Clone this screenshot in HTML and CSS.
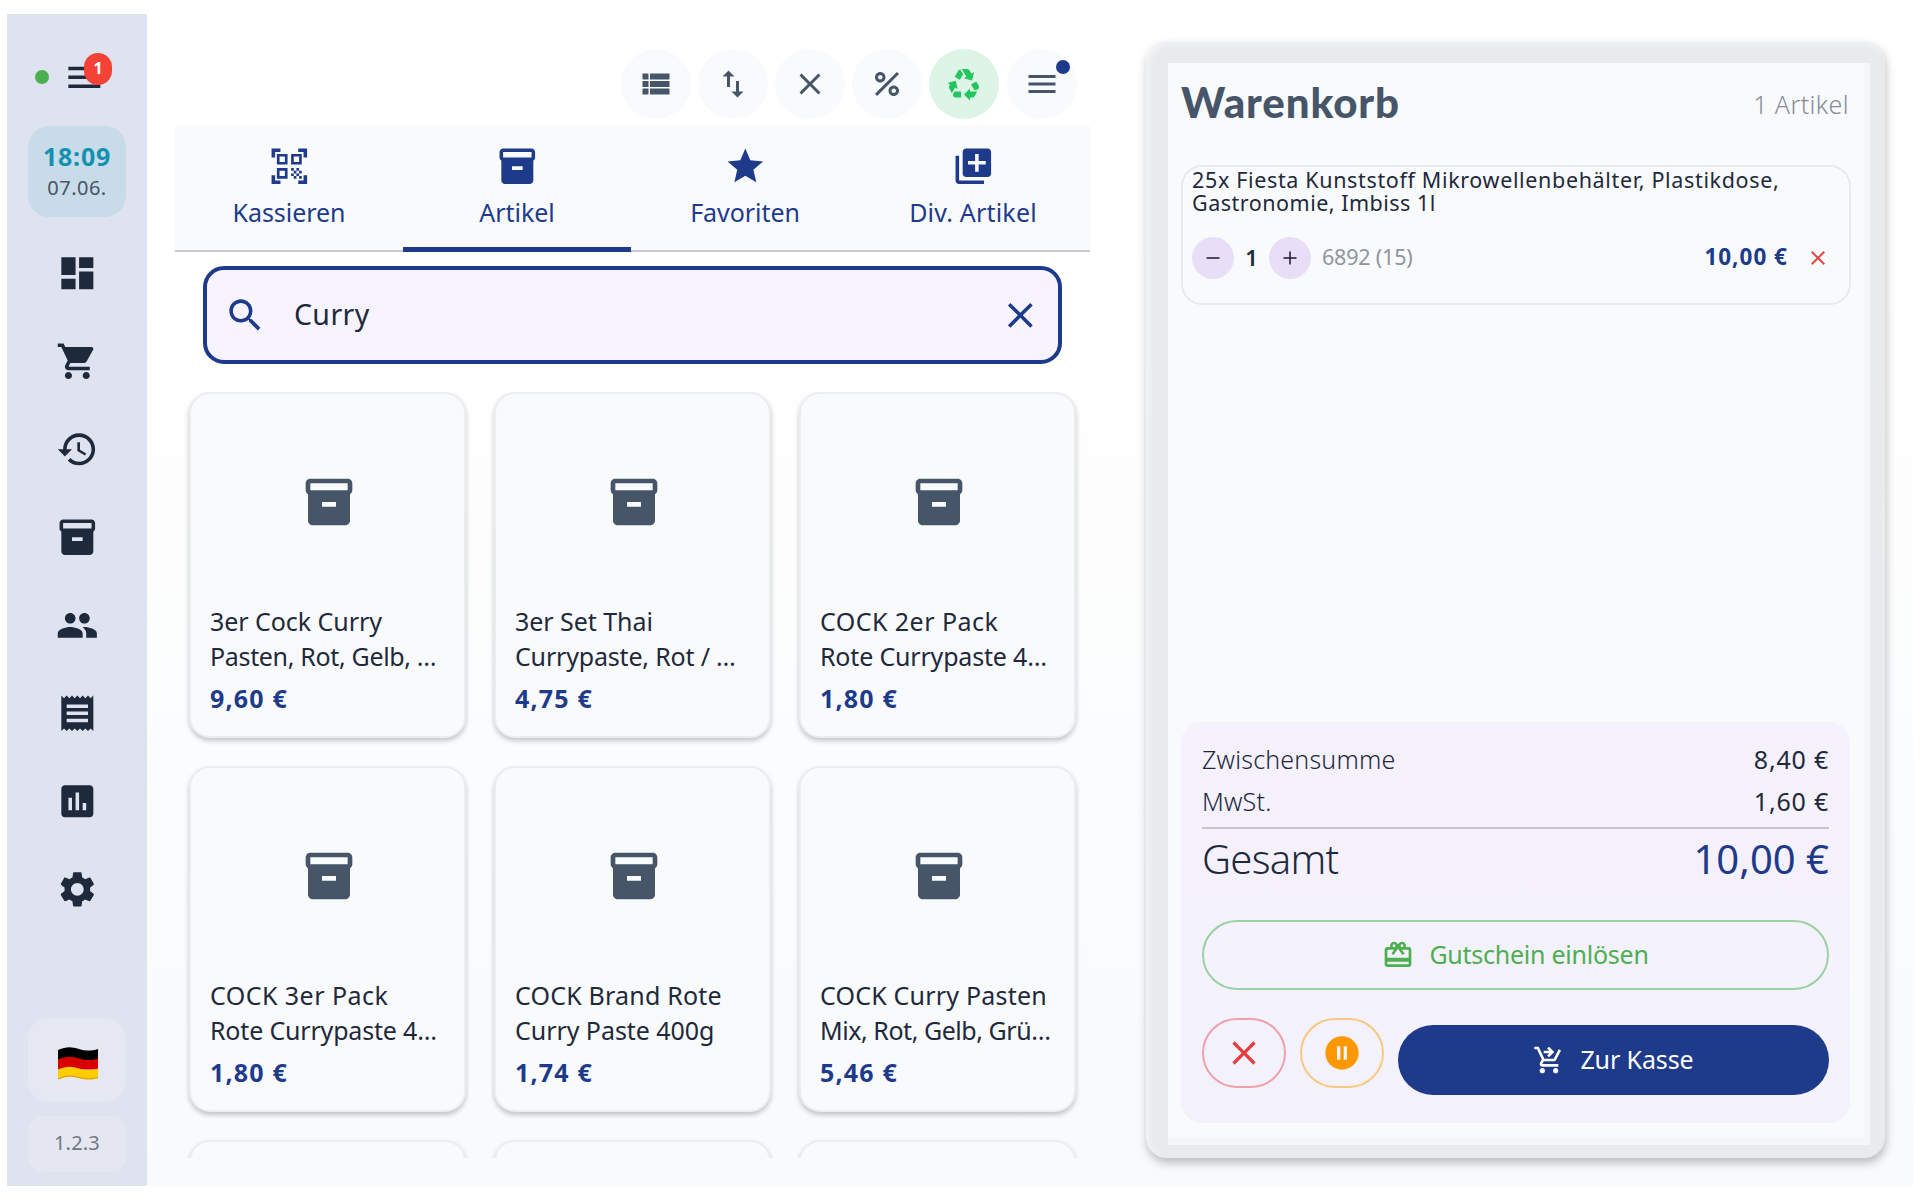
FILE: index.html
```html
<!DOCTYPE html>
<html lang="de">
<head>
<meta charset="utf-8">
<title>Kasse</title>
<link rel="stylesheet" href="styles.css">
</head>
<body>
<svg class="defs" aria-hidden="true">
  <symbol id="i-menu" viewBox="0 0 24 24"><path d="M3 18h18v-2H3v2zm0-5h18v-2H3v2zm0-7v2h18V6H3z"/></symbol>
  <symbol id="i-close" viewBox="0 0 24 24"><path d="M19 6.41 17.59 5 12 10.59 6.41 5 5 6.41 10.59 12 5 17.59 6.41 19 12 13.41 17.59 19 19 17.59 13.41 12z"/></symbol>
  <symbol id="i-box" viewBox="0 0 24 24"><path d="M20 2H4c-1 0-2 .9-2 2v3.01c0 .72.43 1.34 1 1.69V20c0 1.1 1.1 2 2 2h14c.9 0 2-.9 2-2V8.7c.57-.35 1-.97 1-1.69V4c0-1.1-1-2-2-2zm-5 12H9v-2h6v2zm5-7H4V4h16v3z"/></symbol>
</svg>
<div class="app">
  <aside class="sidebar">
    <div class="status">
      <span class="online"></span>
      <span class="menu"><svg class="icon"><use href="#i-menu"/></svg><span class="badge">1</span></span>
    </div>
    <div class="clock"><span class="time">18:09</span><span class="date">07.06.</span></div>
    <nav class="nav">
      <a><svg class="icon" viewBox="0 0 24 24"><path d="M3 13h8V3H3v10zm0 8h8v-6H3v6zm10 0h8V11h-8v10zm0-18v6h8V3h-8z"/></svg></a>
      <a><svg class="icon" viewBox="0 0 24 24"><path d="M7 18c-1.1 0-1.99.9-1.99 2S5.9 22 7 22s2-.9 2-2-.9-2-2-2zM1 2v2h2l3.6 7.59-1.35 2.45c-.16.28-.25.61-.25.96 0 1.1.9 2 2 2h12v-2H7.42c-.14 0-.25-.11-.25-.25l.03-.12.9-1.63h7.45c.75 0 1.41-.41 1.75-1.03l3.58-6.49c.08-.14.12-.31.12-.48 0-.55-.45-1-1-1H5.21l-.94-2H1zm16 16c-1.1 0-1.99.9-1.99 2s.89 2 1.99 2 2-.9 2-2-.9-2-2-2z"/></svg></a>
      <a><svg class="icon" viewBox="0 0 24 24"><path d="M13 3c-4.97 0-9 4.03-9 9H1l3.89 3.89.07.14L9 12H6c0-3.87 3.13-7 7-7s7 3.13 7 7-3.13 7-7 7c-1.93 0-3.68-.79-4.94-2.06l-1.42 1.42C8.27 19.99 10.51 21 13 21c4.97 0 9-4.03 9-9s-4.03-9-9-9zm-1 5v5l4.28 2.54.72-1.21-3.5-2.08V8H12z"/></svg></a>
      <a><svg class="icon"><use href="#i-box"/></svg></a>
      <a><svg class="icon" viewBox="0 0 24 24"><path d="M16 11c1.66 0 2.99-1.34 2.99-3S17.66 5 16 5c-1.66 0-3 1.34-3 3s1.34 3 3 3zm-8 0c1.66 0 2.99-1.34 2.99-3S9.66 5 8 5C6.34 5 5 6.34 5 8s1.34 3 3 3zm0 2c-2.33 0-7 1.17-7 3.5V19h14v-2.5c0-2.33-4.67-3.5-7-3.5zm8 0c-.29 0-.62.02-.97.05 1.16.84 1.97 1.97 1.97 3.45V19h6v-2.5c0-2.33-4.67-3.5-7-3.5z"/></svg></a>
      <a><svg class="icon" viewBox="0 0 24 24"><path d="M18 17H6v-2h12v2zm0-4H6v-2h12v2zm0-4H6V7h12v2zM3 22l1.500-1.500L6 22l1.500-1.500L9 22l1.500-1.500L12 22l1.500-1.500L15 22l1.500-1.500L18 22l1.500-1.500L21 22V2l-1.500 1.500L18 2l-1.500 1.500L15 2l-1.500 1.500L12 2l-1.500 1.500L9 2 7.500 3.500 6 2 4.500 3.500 3 2v20z"/></svg></a>
      <a><svg class="icon" viewBox="0 0 24 24"><path d="M19 3H5c-1.1 0-2 .9-2 2v14c0 1.1.9 2 2 2h14c1.1 0 2-.9 2-2V5c0-1.1-.9-2-2-2zM9 17H7v-7h2v7zm4 0h-2V7h2v10zm4 0h-2v-4h2v4z"/></svg></a>
      <a><svg class="icon" viewBox="0 0 24 24"><path d="M19.14 12.94c.04-.3.06-.61.06-.94 0-.32-.02-.64-.07-.94l2.03-1.58c.18-.14.23-.41.12-.61l-1.92-3.32c-.12-.22-.37-.29-.59-.22l-2.39.96c-.5-.38-1.03-.7-1.62-.94l-.36-2.54c-.04-.24-.24-.41-.48-.41h-3.84c-.24 0-.43.17-.47.41l-.36 2.54c-.59.24-1.13.57-1.62.94l-2.39-.96c-.22-.08-.47 0-.59.22L2.74 8.87c-.12.21-.08.47.12.61l2.03 1.58c-.05.3-.09.63-.09.94s.02.64.07.94l-2.03 1.58c-.18.14-.23.41-.12.61l1.92 3.32c.12.22.37.29.59.22l2.39-.96c.5.38 1.03.7 1.62.94l.36 2.54c.05.24.24.41.48.41h3.84c.24 0 .44-.17.47-.41l.36-2.54c.59-.24 1.13-.56 1.62-.94l2.39.96c.22.08.47 0 .59-.22l1.92-3.32c.12-.22.07-.47-.12-.61l-2.01-1.58zM12 15.6c-1.98 0-3.6-1.62-3.6-3.6s1.62-3.6 3.6-3.6 3.6 1.62 3.6 3.6-1.62 3.6-3.6 3.6z"/></svg></a>
    </nav>
    <div class="lang">
      <svg class="flag" viewBox="0 0 40 33"><path fill="#000" d="M0 3C9-1 14 0 21 2s12 2 19 0v11H0z"/><path fill="#d80000" d="M0 12.500c9-4 14-3 21-1s12 2 19 0v11H0z"/><path fill="#fc0" d="M0 22.500c9-4 14-3 21-1s12 2 19 0V31c-7 2-12 2-19 0s-12-2.500-21 1.500z"/><path fill="none" stroke="#d59a00" d="M0 32c9-4 14-3 21-1.500s12 2 19 0"/></svg>
    </div>
    <div class="version">1.2.3</div>
  </aside>

  <main class="main">
    <div class="toolbar">
      <button class="tool"><svg class="icon" viewBox="0 0 24 24"><path d="M3 14h4v-4H3v4zm0 5h4v-4H3v4zM3 9h4V5H3v4zm5 5h13v-4H8v4zm0 5h13v-4H8v4zM8 5v4h13V5H8z"/></svg></button>
      <button class="tool"><svg class="icon" viewBox="0 0 24 24"><path d="M16 17.010V10h-2v7.010h-3L15 21l4-3.990h-3zM9 3 5 6.990h3V14h2V6.990h3L9 3z"/></svg></button>
      <button class="tool"><svg class="icon"><use href="#i-close"/></svg></button>
      <button class="tool"><svg class="icon" viewBox="0 0 24 24"><path d="M7.500 11C9.430 11 11 9.430 11 7.500S9.430 4 7.500 4 4 5.570 4 7.500 5.570 11 7.500 11zm0-5C8.330 6 9 6.670 9 7.500S8.330 9 7.500 9 6 8.330 6 7.500 6.670 6 7.500 6zM4 18.580 18.590 4 20 5.410 5.420 20zM16.500 13c-1.930 0-3.500 1.570-3.500 3.500s1.570 3.500 3.500 3.500 3.500-1.570 3.500-3.500-1.570-3.500-3.500-3.500zm0 5c-.83 0-1.500-.67-1.500-1.500s.67-1.500 1.500-1.500 1.500.67 1.500 1.500-.67 1.500-1.500 1.500z"/></svg></button>
      <button class="tool tool-active"><svg class="icon" viewBox="0 0 24 24"><path d="M5.770 7.150 7.200 4.780l1.030-1.710c.39-.65 1.330-.65 1.720 0l1.480 2.460-1.230 2.060-1 1.620-3.430-2.060zm15.950 5.820-1.600-2.660-3.460 2L18.870 16H20c.76 0 1.450-.43 1.790-1.110.14-.28.21-.58.21-.89 0-.36-.1-.71-.28-1.030zM16 21h1.500c.76 0 1.450-.43 1.790-1.110L20.740 17H16v-2l-4 4 4 4v-2zm-6-4H5.700l-.84 1.410c-.3.5-.32 1.120-.06 1.650.28.57.87.94 1.520.94H10v-4zm-3.880-2.650 1.730 1.040L6.480 9.900 1 11.270l1.700 1.020-.41.69c-.35.59-.38 1.310-.07 1.920l1.630 3.260 2.270-3.810zm10.900-9.210-1.300-2.170C15.350 2.370 14.700 2 14 2h-3.530l3.120 5.200-1.720 1.030 5.490 1.370 1.370-5.490-1.710 1.030z"/></svg></button>
      <button class="tool"><svg class="icon"><use href="#i-menu"/></svg><span class="dot"></span></button>
    </div>

    <div class="tabs">
      <div class="tab"><svg class="icon" viewBox="0 0 24 24"><path d="M9.500 6.500v3h-3v-3h3M11 5H5v6h6V5zm-1.500 9.500v3h-3v-3h3M11 13H5v6h6v-6zm6.500-6.500v3h-3v-3h3M19 5h-6v6h6V5zm-6 8h1.500v1.500H13V13zm1.500 1.500H16V16h-1.500v-1.500zM16 13h1.500v1.500H16V13zm-3 3h1.500v1.500H13V16zm1.500 1.500H16V19h-1.500v-1.500zM16 16h1.500v1.500H16V16zm1.500-1.500H19V16h-1.500v-1.500zm0 3H19V19h-1.500v-1.500zM22 7h-2V4h-3V2h5v5zm0 15v-5h-2v3h-3v2h5zM2 22h5v-2H4v-3H2v5zM2 2v5h2V4h3V2H2z"/></svg><span>Kassieren</span></div>
      <div class="tab tab-active"><svg class="icon"><use href="#i-box"/></svg><span>Artikel</span></div>
      <div class="tab"><svg class="icon" viewBox="0 0 24 24"><path d="M12 17.270 18.180 21l-1.640-7.030L22 9.240l-7.190-.61L12 2 9.190 8.630 2 9.240l5.460 4.730L5.820 21z"/></svg><span>Favoriten</span></div>
      <div class="tab"><svg class="icon" viewBox="0 0 24 24"><path d="M4 6H2v14c0 1.1.9 2 2 2h14v-2H4V6zm16-4H8c-1.1 0-2 .9-2 2v12c0 1.1.9 2 2 2h12c1.1 0 2-.9 2-2V4c0-1.1-.9-2-2-2zm-1 9h-4v4h-2v-4H9V9h4V5h2v4h4v2z"/></svg><span class="loose">Div. Artikel</span></div>
    </div>

    <div class="search">
      <svg class="icon" viewBox="0 0 24 24"><path d="M15.500 14h-.79l-.28-.27C15.410 12.590 16 11.110 16 9.500 16 5.910 13.090 3 9.500 3S3 5.910 3 9.500 5.910 16 9.500 16c1.610 0 3.090-.59 4.230-1.570l.27.28v.79l5 4.990L20.490 19l-4.990-5zm-6 0C7.010 14 5 11.990 5 9.500S7.010 5 9.500 5 14 7.010 14 9.500 11.990 14 9.500 14z"/></svg>
      <span class="query">Curry</span>
      <svg class="icon"><use href="#i-close"/></svg>
    </div>

    <div class="products">
      <article class="product"><div class="thumb"><svg class="icon"><use href="#i-box"/></svg></div><h3>3er Cock Curry<br><span class="tight">Pasten, Rot, Gelb, …</span></h3><p>9,60 €</p></article>
      <article class="product"><div class="thumb"><svg class="icon"><use href="#i-box"/></svg></div><h3>3er Set Thai<br><span class="snug">Currypaste, Rot / …</span></h3><p>4,75 €</p></article>
      <article class="product"><div class="thumb"><svg class="icon"><use href="#i-box"/></svg></div><h3><span class="wide">COCK 2er Pack</span><br><span class="snug">Rote Currypaste 4…</span></h3><p>1,80 €</p></article>
      <article class="product"><div class="thumb"><svg class="icon"><use href="#i-box"/></svg></div><h3><span class="wide">COCK 3er Pack</span><br><span class="snug">Rote Currypaste 4…</span></h3><p>1,80 €</p></article>
      <article class="product"><div class="thumb"><svg class="icon"><use href="#i-box"/></svg></div><h3><span class="loose">COCK Brand Rote</span><br>Curry Paste 400g</h3><p>1,74 €</p></article>
      <article class="product"><div class="thumb"><svg class="icon"><use href="#i-box"/></svg></div><h3><span class="loose">COCK Curry Pasten</span><br><span class="tighter">Mix, Rot, Gelb, Grü…</span></h3><p>5,46 €</p></article>
      <article class="product"></article>
      <article class="product"></article>
      <article class="product"></article>
    </div>
  </main>

  <section class="cart">
    <div class="cart-inner">
      <header class="cart-head"><h2>Warenkorb</h2><span>1 Artikel</span></header>
      <div class="item">
        <div class="item-name"><span>25x Fiesta Kunststoff Mikrowellenbehälter, Plastikdose,</span><br>Gastronomie, Imbiss 1l</div>
        <div class="item-row">
          <button class="step"><svg viewBox="0 0 14 14"><path d="M.5 7h13"/></svg></button>
          <span class="qty">1</span>
          <button class="step"><svg viewBox="0 0 14 14"><path d="M.5 7h13M7 .5v13"/></svg></button>
          <span class="sku">6892 (15)</span>
          <span class="item-price">10,00 €</span>
          <svg class="icon remove"><use href="#i-close"/></svg>
        </div>
      </div>
      <div class="summary">
        <div class="line"><span class="subtotal">Zwischensumme</span><b>8,40 €</b></div>
        <div class="line"><span>MwSt.</span><b>1,60 €</b></div>
        <div class="total"><span>Gesamt</span><b>10,00 €</b></div>
        <button class="voucher"><svg class="icon" viewBox="0 0 24 24"><path d="M20 6h-2.180c.11-.31.18-.65.18-1 0-1.660-1.340-3-3-3-1.050 0-1.960.54-2.500 1.350l-.5.67-.5-.68C10.960 2.540 10.050 2 9 2 7.340 2 6 3.340 6 5c0 .35.07.69.18 1H4c-1.110 0-1.990.89-1.990 2L2 19c0 1.110.89 2 2 2h16c1.110 0 2-.89 2-2V8c0-1.110-.89-2-2-2zm-5-2c.55 0 1 .45 1 1s-.45 1-1 1-1-.45-1-1 .45-1 1-1zM9 4c.55 0 1 .45 1 1s-.45 1-1 1-1-.45-1-1 .45-1 1-1zm11 15H4v-2h16v2zm0-5H4V8h5.080L7 10.830 8.620 12 11 8.760l1-1.360 1 1.360L15.380 12 17 10.830 14.920 8H20v6z"/></svg><span>Gutschein einlösen</span></button>
        <div class="actions">
          <button class="pill cancel"><svg class="icon"><use href="#i-close"/></svg></button>
          <button class="pill hold"><svg class="icon" viewBox="0 0 24 24"><path d="M12 2C6.480 2 2 6.480 2 12s4.480 10 10 10 10-4.480 10-10S17.520 2 12 2zm-1 14H9V8h2v8zm4 0h-2V8h2v8z"/></svg></button>
          <button class="checkout"><svg class="icon" viewBox="0 0 24 24"><path d="M7 18c-1.1 0-1.99.9-1.99 2S5.9 22 7 22s2-.9 2-2-.9-2-2-2zm10 0c-1.1 0-1.99.9-1.99 2s.89 2 1.99 2 2-.9 2-2-.9-2-2-2zm-8.9-5h7.45c.75 0 1.41-.41 1.75-1.03L21 4.96 19.25 4l-3.7 7H8.53L4.27 2H1v2h2l3.6 7.59-1.35 2.44C4.52 15.37 5.48 17 7 17h12v-2H7l1.1-2zM12 2l4 4-4 4-1.41-1.41L12.17 7H8V5h4.17l-1.59-1.59L12 2z"/></svg><span>Zur Kasse</span></button>
        </div>
      </div>
    </div>
  </section>
</div>
</body>
</html>
```
FILE: styles.css
```css
* { box-sizing: border-box; margin: 0; padding: 0; }
body {
  width: 1920px; height: 1200px; overflow: hidden;
  background: #fff; color: #1e293b;
  font: 400 25px "Noto Sans", sans-serif;
}
button { border: 0; background: none; color: inherit; font: inherit; letter-spacing: inherit; }
.defs { display: none; }
.icon { display: block; flex: none; width: 42.67px; height: 42.67px; fill: currentColor; }

.app {
  display: flex; width: 1906px; height: 1172px; margin: 14px 7px;
  background: linear-gradient(#fff 20%, #f8fafc);
}

/* Sidebar */
.sidebar {
  display: flex; flex-direction: column; align-items: center;
  width: 140px; background: #dfe2ef; padding: 39px 21px 14px;
}
.status { display: flex; align-items: center; align-self: stretch; gap: 13.7px; height: 48px; padding-left: 7px; }
.online { width: 14px; height: 14px; border-radius: 50%; background: #4caf50; }
.menu { position: relative; }
.badge {
  position: absolute; left: 21.3px; top: -2.6px; width: 28px; height: 32px; border-radius: 14px;
  background: #f44336; color: #fff; font-size: 16px; font-weight: 700; line-height: 30px; text-align: center;
}
.clock {
  display: flex; flex-direction: column; align-items: center;
  width: 98px; height: 91px; margin: 25px 0 12px; padding-top: 14px;
  border-radius: 21px; background: #c8dbe8; white-space: nowrap;
}
.time { font-size: 25px; line-height: 33px; font-weight: 700; letter-spacing: .8px; color: #1591b0; }
.date { font-size: 20px; line-height: 29px; letter-spacing: .5px; color: #475569; }
.nav a { display: flex; align-items: center; justify-content: center; height: 88px; }
.lang {
  display: flex; align-items: center; justify-content: center;
  width: 98px; height: 84px; margin-top: auto; border-radius: 21px; background: #e5e7f3;
}
.flag { width: 40px; height: 33px; margin: 7px 0 0 2px; }
.version {
  width: 98px; height: 56px; margin-top: 14px; border-radius: 15px; background: #e4e7f1;
  font-size: 20px; line-height: 54px; letter-spacing: .2px; text-align: center; color: #717884;
}

/* Product area */
.main { display: flex; flex-direction: column; width: 998.5px; padding: 35px 0 28px 28px; }
.toolbar { display: flex; justify-content: flex-end; gap: 7.1px; padding-right: 69px; height: 77px; }
.tool {
  position: relative; display: flex; align-items: center; justify-content: center;
  width: 70px; height: 70px; border-radius: 50%; background: #f9fafc; color: #475569;
}
.tool .icon { width: 36px; height: 36px; }
.tool-active { background: #dcf5e6; color: #22c55e; }
.dot { position: absolute; right: 7px; top: 11px; width: 14px; height: 14px; border-radius: 50%; background: #1e3a8a; }

.tabs { display: grid; grid-template-columns: 228px 228px 228px 231px; flex: none; width: 915px; height: 126px; background: #f8fafc; color: #1e3a8a; }
.tab {
  display: flex; flex-direction: column; align-items: center; gap: 7px;
  padding-top: 19px; border-bottom: 2px solid #c8c8ce; letter-spacing: -.05px; line-height: 35px;
}
.tab:last-child { padding-right: 3px; }
.tab-active { border-bottom: 5px solid #1e3a8a; }
.loose { letter-spacing: .2px; }

.search {
  display: flex; align-items: center; flex: none; width: 859px; height: 98px; margin: 14px 0 28px 28px;
  padding: 0 16px 0 17px; border: 4px solid #1e3a8a; border-radius: 21px; background: #f7f4ff; color: #1e3a8a;
}
.query { flex: 1; padding: 0 0 2px 27.3px; font-size: 28.5px; letter-spacing: .4px; color: #1e293b; }

.products {
  display: grid; grid-template-columns: repeat(3, 277px); grid-auto-rows: 346px; gap: 28px;
  height: 766px; margin-left: 7px; padding-left: 7px; overflow: hidden; flex: none;
}
.product {
  border: 2px solid #ebedef; border-radius: 21px; background: #f9fafc; padding: 0 17px 0 19px;
  box-shadow: 0 3px 5px rgba(0, 0, 0, .22); white-space: nowrap;
}
.thumb { display: flex; align-items: center; justify-content: center; height: 210px; padding-top: 6px; color: #475569; }
.thumb .icon { width: 56px; height: 56px; }
.product h3 { font-size: 25px; font-weight: 400; line-height: 35px; letter-spacing: -.05px; }
.product .snug { letter-spacing: -.18px; }
.product .tight { letter-spacing: -.33px; }
.product .tighter { letter-spacing: -.45px; }
.product .wide { letter-spacing: .45px; }
.product p { margin-top: 8px; font-weight: 700; line-height: 32px; letter-spacing: 1.2px; color: #1e3a8a; }

/* Cart */
.cart {
  width: 739.5px; height: 1117px; margin-top: 27px; padding: 21.5px 15px 13px 22.5px;
  border-radius: 21px; background: #e8eaec;
  box-shadow: 1px 5px 10px rgba(0, 0, 0, .25), inset 3px 3px 6px rgba(255, 255, 255, .5);
}
.cart-inner {
  display: flex; flex-direction: column; height: 100%; padding: 0 13px 14px 13px;
  border-right: 6px solid #f5f6f8; border-bottom: 8px solid #f5f6f8; background: #f9fafc;
}
.cart-head { display: flex; justify-content: space-between; height: 102px; padding-right: 2px; }
.cart-head h2 { font: 900 42px/79px Lato, sans-serif; letter-spacing: .9px; color: #475569; }
.cart-head span { font-weight: 350; line-height: 82px; letter-spacing: .4px; color: #858c99; }
.item {
  width: 670px; height: 140px; padding: 1px 19px 0 9px; border: 2px solid #e8e9ec; border-radius: 21px;
}
.item-name { font-size: 21.5px; line-height: 23.5px; letter-spacing: .5px; white-space: nowrap; }
.item-name span { letter-spacing: .65px; }
.item-row { display: flex; align-items: center; margin-top: 21px; height: 44px; }
.step { display: flex; align-items: center; justify-content: center; width: 42px; height: 42px; border-radius: 50%; background: #e8def8; }
.step svg { width: 14px; height: 14px; fill: none; stroke: #1d192b; stroke-width: 1.5; }
.qty { width: 35px; padding-bottom: 2px; font-size: 22px; font-weight: 600; text-align: center; }
.sku { margin-left: 11px; padding-bottom: 3px; font-size: 21.5px; letter-spacing: -.2px; color: #8f959f; }
.item-price { margin-left: auto; padding-bottom: 3px; font-size: 22.5px; font-weight: 700; letter-spacing: 1px; color: #1e3a8a; }
.remove { width: 24px; height: 24px; margin-left: 18px; color: #e04848; }

.summary { width: 669px; height: 401px; margin-top: auto; padding: 21px; border-radius: 21px; background: linear-gradient(#f5f1fd, #f3f2fc); }
.line { display: flex; justify-content: space-between; height: 41.5px; line-height: 33px; font-weight: 350; letter-spacing: .2px; }
.line b { font-weight: 400; letter-spacing: .8px; }
.total {
  display: flex; justify-content: space-between; height: 93px; margin-top: 1px; border-top: 2px solid #c6c4d2;
  font-size: 40px; line-height: 59px; font-weight: 350; letter-spacing: -.7px;
}
.total b { font-weight: 450; letter-spacing: 0; }
.total b { color: #1e3a8a; }
.voucher {
  display: flex; align-items: center; justify-content: center; gap: 15px; width: 100%; height: 70px;
  border: 2px solid #9bd0a0; border-radius: 35px; color: #4caf50; letter-spacing: -.25px;
}
.voucher .icon, .checkout .icon { width: 32px; height: 32px; }
.voucher span, .checkout span { padding-bottom: 2px; }
.actions { display: flex; gap: 14px; margin-top: 28px; }
.pill { display: flex; align-items: center; justify-content: center; width: 84px; height: 70px; border: 2px solid; border-radius: 35px; }
.pill .icon { width: 40px; height: 40px; }
.cancel { border-color: #f0a0a8; }
.cancel .icon { color: #e53e3e; }
.hold { border-color: #f9c880; }
.hold .icon { color: #ff9800; }
.checkout {
  display: flex; align-items: center; justify-content: center; gap: 15px; flex: 1; height: 70px; margin-top: 7px;
  border-radius: 35px; background: #1e3a8a; color: #fff; letter-spacing: -.1px;
}
```
